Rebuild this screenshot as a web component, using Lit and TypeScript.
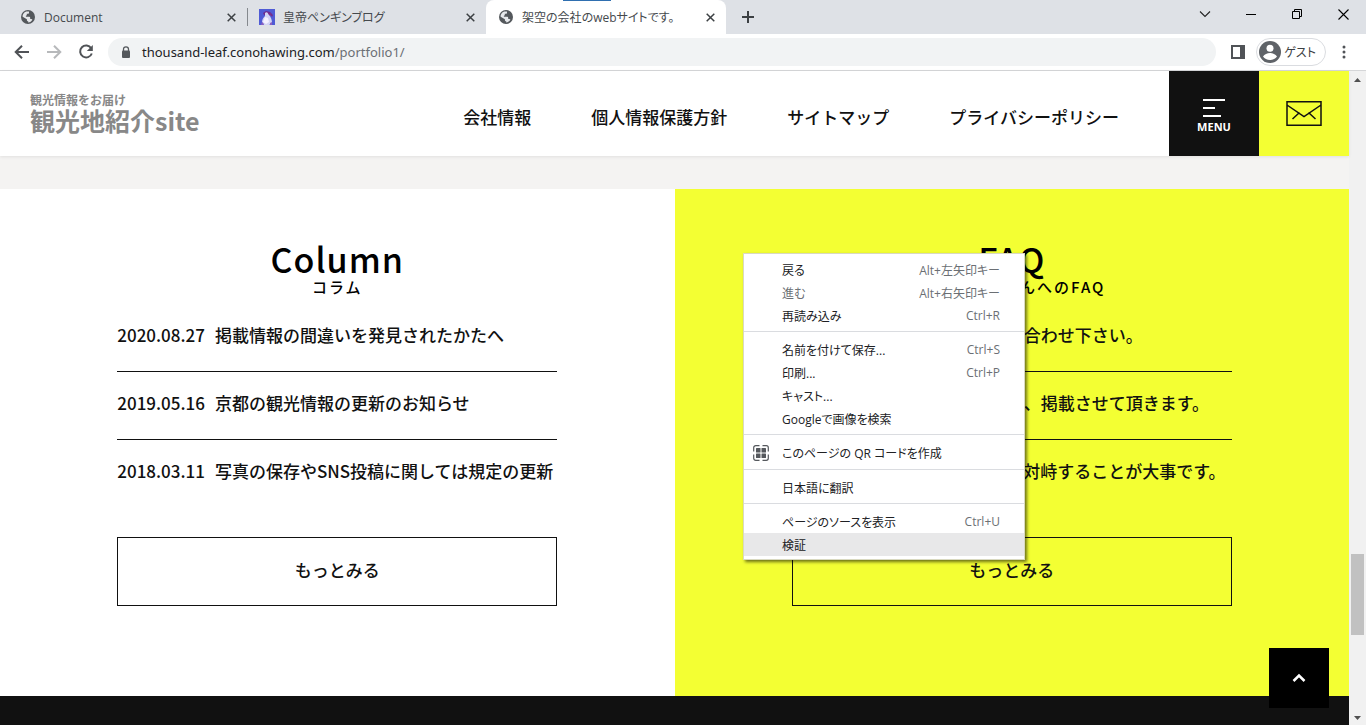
import { LitElement, html, css, svg, nothing } from "lit";
import { customElement, property } from "lit/decorators.js";
import { classMap } from "lit/directives/class-map.js";

interface Entry {
  mark: string;
  text: string;
}

interface MenuEntry {
  label: string;
  keys?: string;
  icon?: boolean;
  active?: boolean;
  muted?: boolean;
}

const columnEntries: Entry[] = [
  { mark: "2020.08.27", text: "掲載情報の間違いを発見されたかたへ" },
  { mark: "2019.05.16", text: "京都の観光情報の更新のお知らせ" },
  { mark: "2018.03.11", text: "写真の保存やSNS投稿に関しては規定の更新" },
];

const faqEntries: Entry[] = [
  { mark: "Q.", text: "不明な点はメールでお問い合わせ下さい。" },
  { mark: "Q.", text: "情報の提供は確認をした後、掲載させて頂きます。" },
  { mark: "Q.", text: "困った時は落ち着いて人と対峙することが大事です。" },
];

const menuGroups: MenuEntry[][] = [
  [
    { label: "戻る", keys: "Alt+左矢印キー" },
    { label: "進む", keys: "Alt+右矢印キー", muted: true },
    { label: "再読み込み", keys: "Ctrl+R" },
  ],
  [
    { label: "名前を付けて保存...", keys: "Ctrl+S" },
    { label: "印刷...", keys: "Ctrl+P" },
    { label: "キャスト..." },
    { label: "Googleで画像を検索" },
  ],
  [{ label: "このページの QR コードを作成", icon: true }],
  [{ label: "日本語に翻訳" }],
  [
    { label: "ページのソースを表示", keys: "Ctrl+U" },
    { label: "検証", active: true },
  ],
];

const globe = html`<svg width="14" height="14" viewBox="0 0 14 14" aria-hidden="true">
  <circle cx="7" cy="7" r="7" fill="#54585c" />
  <path
    d="M1.5 6.6c0-2.4 1.5-4.4 3.7-5.1L8 1.6v1.1c0 .6-.5.9-1 1H5.8v1.2c0 .5-.4.8-.9.8v1.1h3.4c.5 0 .9.4.9.9v1.2h1c.6 0 1 .3 1.2.8-.9 1.6-2.4 2.6-4.2 2.8v-1.2c-.8 0-1.3-.6-1.3-1.3v-.7L2.500 7.200z"
    fill="#e6e8eb"
  />
</svg>`;

const cross = html`<svg width="9" height="9" viewBox="0 0 9 9" aria-hidden="true">
  <path d="M.7.7l7.600 7.600M8.300.7L.7 8.300" stroke="#3c4043" stroke-width="1.500" fill="none" />
</svg>`;

const penguin = html`<svg width="16" height="16" viewBox="0 0 16 16" aria-hidden="true">
  <rect width="16" height="16" fill="#4f5bd5" />
  <path d="M4 4l3-2 4 1 3 3-1 2-2-3-3 2-3-1z" fill="#6b2c8f" />
  <path d="M6 4c2-2 4 0 4 2 2 2 3 5 3 8l-3 2H5l-2-3c0-3 2-5 3-6z" fill="#d3d4f4" />
  <path d="M6 8l3 1 1 4-3 2-3-2z" fill="#f4f1ff" />
  <path d="M8 3l4 1 1 3-3-1z" fill="#7a2f8c" />
  <path d="M3 13l2 2-1 1H2zM11 14l2-1v3h-2z" fill="#8b5fc0" />
</svg>`;

@customElement("browser-tab")
class BrowserTab extends LitElement {
  @property() label = "";
  @property() icon = "globe";
  static styles = css`
    :host {
      display: flex;
      align-items: center;
      box-sizing: border-box;
      height: 100%;
      min-width: 0;
      font-size: 12px;
      color: #45494d;
    }
    svg { display: block; }
    .icon { flex: none; width: 16px; display: grid; place-items: center; }
    .label {
      flex: 1;
      margin-left: 8px;
      overflow: hidden;
      white-space: nowrap;
      font-feature-settings: "palt";
    }
    .close {
      display: grid;
      place-items: center;
      width: 16px;
      height: 16px;
      padding: 0;
      border: 0;
      background: none;
    }
  `;
  render() {
    return html`
      <span class="icon">${this.icon === "globe" ? globe : penguin}</span>
      <span class="label">${this.label}</span>
      <button class="close" aria-label="閉じる">${cross}</button>
    `;
  }
}

@customElement("browser-chrome")
class BrowserChrome extends LitElement {
  static styles = css`
    :host { display: block; flex: none; }
    svg { display: block; }
    button { padding: 0; border: 0; background: none; display: grid; place-items: center; font: inherit; color: inherit; }
    .strip {
      display: flex;
      height: 34px;
      background: #dee1e6;
      justify-content: space-between;
    }
    .tabs { display: flex; align-items: stretch; }
    .tab { width: 247px; padding: 0 8px 0 20px; }
    .second { width: 239px; padding: 0 8px 0 12px; position: relative; }
    .second::before {
      content: "";
      position: absolute;
      left: 0;
      top: 8px;
      width: 1px;
      height: 18px;
      background: #85898e;
    }
    .current {
      width: 240px;
      padding: 0 8px 0 12px;
      background: linear-gradient(#2f6fb0, #2f6fb0) 77px 0 / 48px 1px no-repeat #fff;
      border-radius: 8px 8px 0 0;
    }
    .plus { width: 44px; }
    .window { display: flex; }
    .window button { width: 46px; height: 28px; }
    .toolbar {
      display: flex;
      align-items: center;
      box-sizing: border-box;
      height: 37px;
      padding: 0 14px 0 6px;
      background: #fff;
      border-bottom: 1px solid #d5d6d8;
    }
    .nav { width: 32px; height: 28px; }
    .address {
      display: flex;
      align-items: center;
      flex: 1;
      height: 28px;
      margin: 0 15px 0 6px;
      padding: 0 12px;
      gap: 10px;
      border-radius: 14px;
      background: #f1f3f4;
      font-family: "Noto Sans", sans-serif;
      font-size: 13px;
      color: #202124;
    }
    .path { color: #6b6f74; }
    .guest {
      display: flex;
      align-items: center;
      box-sizing: border-box;
      width: 70px;
      height: 28px;
      margin: 0 10px 0 11px;
      padding: 0 9px 0 2px;
      justify-content: space-between;
      border: 1px solid #dadce0;
      border-radius: 14px;
      font-size: 12px;
      color: #3c4043;
      font-feature-settings: "palt";
    }
    .more { width: 16px; height: 28px; }
  `;
  render() {
    return html`
      <div class="strip">
        <div class="tabs">
          <browser-tab class="tab" label="Document"></browser-tab>
          <browser-tab class="second" label="皇帝ペンギンブログ" icon="penguin"></browser-tab>
          <browser-tab class="current" label="架空の会社のwebサイトです。"></browser-tab>
          <button class="plus" aria-label="新しいタブ">
            <svg width="12" height="12" viewBox="0 0 12 12"><path d="M6 0v12M0 6h12" stroke="#3c4043" stroke-width="2" /></svg>
          </button>
        </div>
        <div class="window">
          <button aria-label="タブを検索">
            <svg width="12" height="12" viewBox="0 0 12 12"><path d="M1 3.500l5 5 5-5" fill="none" stroke="#222" stroke-width="1.100" /></svg>
          </button>
          <button aria-label="最小化">
            <svg width="11" height="11" viewBox="0 0 11 11"><path d="M0 5.500h10" stroke="#000" /></svg>
          </button>
          <button aria-label="元に戻す">
            <svg width="11" height="11" viewBox="0 0 11 11"><path d="M.5 2.500h7v7h-7zM2.500 2.500v-2h7v7h-2" fill="none" stroke="#000" /></svg>
          </button>
          <button aria-label="ウィンドウを閉じる">
            <svg width="11" height="11" viewBox="0 0 11 11"><path d="M.5.5l10 10M10.500.5l-10 10" stroke="#000" stroke-width="1.100" /></svg>
          </button>
        </div>
      </div>
      <div class="toolbar">
        <button class="nav" aria-label="戻る">
          <svg width="16" height="16" viewBox="0 0 16 16"><path d="M15 8H2M8 1.700L1.700 8 8 14.300" fill="none" stroke="#505357" stroke-width="2" /></svg>
        </button>
        <button class="nav" aria-label="進む">
          <svg width="16" height="16" viewBox="0 0 16 16"><path d="M1 8h13M8 1.700L14.300 8 8 14.300" fill="none" stroke="#b7b9bb" stroke-width="2" /></svg>
        </button>
        <button class="nav" aria-label="更新">
          <svg width="16" height="16" viewBox="0 0 16 16">
            <path d="M13.200 4.200A6 6 0 1 0 13.800 9.500" fill="none" stroke="#505357" stroke-width="2" />
            <path d="M14.800 1v6H8.800z" fill="#505357" />
          </svg>
        </button>
        <div class="address">
          <svg width="12" height="12" viewBox="0 0 12 12">
            <path d="M3.500 5V3.300a2.500 2.500 0 0 1 5 0V5" fill="none" stroke="#54585c" stroke-width="1.300" />
            <rect x="2" y="4.500" width="8" height="7.500" rx="1" fill="#54585c" />
          </svg>
          <span>thousand-leaf.conohawing.com<span class="path">/portfolio1/</span></span>
        </div>
        <button aria-label="サイドパネル">
          <svg width="14" height="14" viewBox="0 0 14 14"><path d="M1 1h12v12H1z" fill="none" stroke="#505357" stroke-width="2" /><path d="M9 1h4v12H9z" fill="#505357" /></svg>
        </button>
        <button class="guest">
          <svg width="22" height="22" viewBox="0 0 22 22">
            <circle cx="11" cy="11" r="11" fill="#5f6368" />
            <circle cx="11" cy="7.300" r="3.500" fill="#fff" />
            <path d="M4 15.500c1.500-2.300 4.200-3.500 7-3.500s5.500 1.200 7 3.500c-1.500 2-4 3.500-7 3.500s-5.500-1.500-7-3.500z" fill="#fff" />
          </svg>
          <span>ゲスト</span>
        </button>
        <button class="more" aria-label="設定">
          <svg width="4" height="14" viewBox="0 0 4 14"><g fill="#505357"><circle cx="2" cy="2" r="1.500" /><circle cx="2" cy="7" r="1.500" /><circle cx="2" cy="12" r="1.500" /></g></svg>
        </button>
      </div>
    `;
  }
}

@customElement("site-header")
class SiteHeader extends LitElement {
  static styles = css`
    :host {
      display: flex;
      position: relative;
      height: 85px;
      background: #fff;
      box-shadow: 0 1px 3px rgba(0, 0, 0, 0.08);
      color: #111;
      font-weight: 500;
    }
    svg { display: block; }
    a { color: inherit; text-decoration: none; }
    button { padding: 0; border: 0; font: inherit; }
    .logo {
      display: flex;
      flex-direction: column;
      margin: 22px auto 0 30px;
      color: #888;
      font-weight: 700;
      white-space: nowrap;
    }
    .lead { font-size: 12px; line-height: 14px; }
    .name { font-size: 25px; line-height: 26px; }
    nav {
      display: flex;
      align-items: center;
      gap: 60px;
      margin: 6px 50px 0 30px;
      font-size: 17px;
      white-space: nowrap;
    }
    .menu {
      display: flex;
      flex-direction: column;
      align-items: center;
      box-sizing: border-box;
      width: 90px;
      padding-top: 28px;
      gap: 2px;
      background: #111;
      color: #fff;
      font-family: "Noto Sans", sans-serif;
      font-size: 11px;
      line-height: 16px;
      font-weight: 700;
    }
    .mail {
      display: grid;
      place-items: center;
      width: 90px;
      background: #f3ff33;
    }
  `;
  render() {
    return html`
      <a class="logo" href="#">
        <span class="lead">観光情報をお届け</span>
        <span class="name">観光地紹介site</span>
      </a>
      <nav>
        <a href="#">会社情報</a>
        <a href="#">個人情報保護方針</a>
        <a href="#">サイトマップ</a>
        <a href="#">プライバシーポリシー</a>
      </nav>
      <button class="menu">
        <svg width="22" height="18" viewBox="0 0 22 18"><path d="M0 1h22M0 9h12M0 17h18" stroke="#fff" stroke-width="2" /></svg>
        MENU
      </button>
      <button class="mail" aria-label="お問い合わせ">
        <svg width="36" height="25" viewBox="0 0 36 25" fill="none" stroke="#111" stroke-width="1.500">
          <path d="M1 .8h34v23.400H1zM1 4l17 11.500L35 4M6.500 18l7-6.500M29.500 18l-7-6.500" />
        </svg>
      </button>
    `;
  }
}

@customElement("news-panel")
class NewsPanel extends LitElement {
  @property() heading = "";
  @property() sub = "";
  @property({ attribute: false }) entries: Entry[] = [];
  static styles = css`
    :host {
      display: flex;
      flex-direction: column;
      align-items: center;
      box-sizing: border-box;
      min-width: 0;
      padding: 50px 20px 90px;
      color: #111;
      font-size: 17px;
      font-weight: 500;
    }
    h2 { margin: 0; font-size: 34px; line-height: 40px; font-weight: 500; letter-spacing: 1px; color: #000; }
    p { margin: 0 0 9px; font-size: 15px; line-height: 16px; letter-spacing: 2px; color: #000; }
    ul { width: 100%; max-width: 440px; margin: 0 0 30px; padding: 0; list-style: none; }
    li { padding: 18px 0 24px; line-height: 25px; border-bottom: 1px solid #111; white-space: nowrap; }
    li:last-child { border-bottom: 0; }
    a { display: flex; gap: 10px; color: inherit; text-decoration: none; }
    button {
      width: 100%;
      max-width: 440px;
      height: 69px;
      padding: 0 0 4px;
      border: 1px solid #111;
      background: none;
      font: inherit;
      color: inherit;
    }
  `;
  render() {
    return html`
      <h2>${this.heading}</h2>
      <p>${this.sub}</p>
      <ul>
        ${this.entries.map(
          (e) => html`<li><a href="#"><span>${e.mark}</span><span>${e.text}</span></a></li>`,
        )}
      </ul>
      <button>もっとみる</button>
    `;
  }
}

@customElement("context-menu")
class ContextMenu extends LitElement {
  static styles = css`
    :host {
      display: block;
      box-sizing: border-box;
      width: 282px;
      padding: 4px 0 3px;
      border: 1px solid #d9d9c0;
      background: #fff;
      box-shadow: 2px 2px 3px rgba(0, 0, 0, 0.55);
      font-size: 12px;
      color: #202124;
      font-feature-settings: "palt";
    }
    hr { height: 1px; margin: 4px 0 6px; border: 0; background: #dadce0; }
    button {
      display: grid;
      grid-template-columns: 34px 1fr auto;
      align-items: center;
      width: 100%;
      height: 23px;
      padding: 0 24px 0 4px;
      border: 0;
      background: none;
      font: inherit;
      font-feature-settings: inherit;
      color: inherit;
      text-align: left;
      white-space: nowrap;
    }
    .wide { height: 24px; }
    .muted, .keys { color: #6b6f74; }
    .active { background: #e8e8e9; }
    svg { display: block; margin-left: 5px; }
  `;
  render() {
    return html`${menuGroups.map(
      (group, i) => html`
        ${i ? html`<hr />` : nothing}
        ${group.map(
          (m) => html`<button
            class=${classMap({ wide: !!m.icon, muted: !!m.muted, active: !!m.active })}
          >
            <span>${m.icon ? this.qr() : nothing}</span>
            <span>${m.label}</span>
            <span class="keys">${m.keys ?? ""}</span>
          </button>`,
        )}
      `,
    )}`;
  }
  private qr() {
    return html`<svg width="16" height="16" viewBox="0 0 16 16">
      <path
        d="M.7 6.500V2.700a2 2 0 0 1 2-2H6.500M9.500 .7h3.800a2 2 0 0 1 2 2V6.500M15.300 9.500v3.800a2 2 0 0 1-2 2H9.500M6.500 15.300H2.700a2 2 0 0 1-2-2V9.500"
        fill="none" stroke="#55585d" stroke-width="1.200"
      />
      ${[3, 8.5].map((x) => [3, 8.5].map((y) => svg`<rect x=${x} y=${y} width="4.500" height="4.500" rx="0.500" fill="#55585d" />`))}
    </svg>`;
  }
}

@customElement("app-root")
class AppRoot extends LitElement {
  static styles = css`
    :host {
      display: flex;
      flex-direction: column;
      position: relative;
      height: 100vh;
      overflow: hidden;
      font-family: "Noto Sans CJK JP", sans-serif;
    }
    browser-chrome, context-menu { font-family: "Open Sans", "Noto Sans CJK JP", sans-serif; }
    svg { display: block; }
    .view { display: flex; flex: 1; min-height: 0; }
    .page {
      display: flex;
      flex-direction: column;
      flex: 1;
      min-width: 0;
      position: relative;
      background: #f4f3f2;
    }
    .panels { display: grid; grid-template-columns: 1fr 1fr; margin-top: 33px; }
    .column { background: #fff; }
    .faq { background: #f3ff33; }
    footer { flex: 1; background: #111; }
    .top {
      position: absolute;
      right: 20px;
      bottom: 17px;
      display: grid;
      place-items: center;
      width: 60px;
      height: 60px;
      padding: 0;
      border: 0;
      background: #000;
    }
    .scroll {
      display: flex;
      flex-direction: column;
      align-items: center;
      justify-content: space-between;
      box-sizing: border-box;
      width: 17px;
      padding: 7px 0 5px;
      background: #f1f1f1;
    }
    .thumb { width: 13px; height: 81px; margin: 472px 0 auto; background: #c1c1c1; }
    context-menu { position: absolute; left: 743px; top: 253px; }
  `;
  render() {
    return html`
      <browser-chrome></browser-chrome>
      <div class="view">
        <div class="page">
          <site-header></site-header>
          <main class="panels">
            <news-panel class="column" heading="Column" sub="コラム" .entries=${columnEntries}></news-panel>
            <news-panel class="faq" heading="FAQ" sub="観光客の皆さんへのFAQ" .entries=${faqEntries}></news-panel>
          </main>
          <footer></footer>
          <button class="top" aria-label="ページの先頭へ">
            <svg width="14" height="10" viewBox="0 0 14 10"><path d="M1.500 8L7 2.500 12.500 8" fill="none" stroke="#fff" stroke-width="2.500" /></svg>
          </button>
        </div>
        <div class="scroll">
          <svg width="7" height="4" viewBox="0 0 7 4"><path d="M0 4L3.500 0 7 4z" fill="#505050" /></svg>
          <div class="thumb"></div>
          <svg width="7" height="4" viewBox="0 0 7 4"><path d="M0 0l3.500 4L7 0z" fill="#505050" /></svg>
        </div>
      </div>
      <context-menu></context-menu>
    `;
  }
}
